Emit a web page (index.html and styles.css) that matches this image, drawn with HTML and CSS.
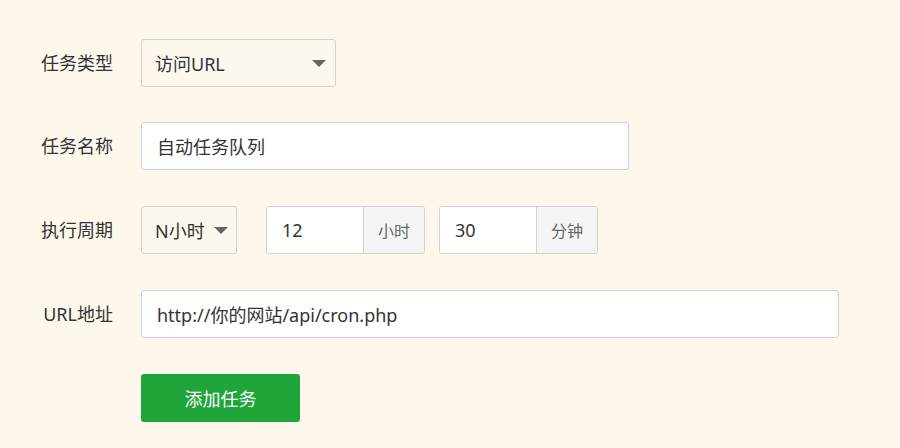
FILE: index.html
```html
<!DOCTYPE html>
<html lang="zh-CN">
<head>
<meta charset="utf-8">
<title>添加任务</title>
<link rel="stylesheet" href="styles.css">
</head>
<body>
<form class="form">
  <div class="row row-first">
    <label class="label">任务类型</label>
    <div class="select select-type"><span>访问URL</span><i class="caret"></i></div>
  </div>
  <div class="row">
    <label class="label">任务名称</label>
    <div class="input input-name">自动任务队列</div>
  </div>
  <div class="row">
    <label class="label">执行周期</label>
    <div class="cycle">
      <div class="select select-cycle"><span>N小时</span><i class="caret"></i></div>
      <div class="group group-hour">
        <div class="group-input">12</div>
        <div class="addon">小时</div>
      </div>
      <div class="group">
        <div class="group-input">30</div>
        <div class="addon">分钟</div>
      </div>
    </div>
  </div>
  <div class="row">
    <label class="label">URL地址</label>
    <div class="input input-url">http://你的网站/api/cron.php</div>
  </div>
  <div class="row">
    <span class="label"></span>
    <button type="button" class="btn">添加任务</button>
  </div>
</form>
</body>
</html>
```
FILE: styles.css
```css
html, body {
  margin: 0;
  padding: 0;
  background: #fef8ec;
}
body {
  font-family: "Noto Sans", "Noto Sans CJK SC", sans-serif;
  font-size: 18px;
  color: #333;
}
.form {
  padding-top: 39px;
  display: flex;
  flex-direction: column;
  gap: 36px;
}
.row-first {
  margin-bottom: -1px;
}
.row {
  display: flex;
  align-items: center;
  gap: 28px;
  height: 48px;
}
.label {
  width: 113px;
  text-align: right;
  flex: none;
  color: #333;
  line-height: 48px;
}
.select {
  box-sizing: border-box;
  height: 48px;
  border: 1px solid #d4d2cc;
  border-radius: 3px;
  background: #fdf8ee;
  display: flex;
  align-items: center;
  justify-content: space-between;
  padding: 0 9px 0 13px;
}
.select-type {
  width: 195px;
}
.select-cycle {
  width: 96px;
  padding-right: 8px;
}
.caret {
  width: 0;
  height: 0;
  border-left: 7px solid transparent;
  border-right: 7px solid transparent;
  border-top: 7px solid #666;
  margin-top: 1px;
}
.input {
  box-sizing: border-box;
  height: 48px;
  border: 1px solid #d2d2d2;
  border-radius: 3px;
  background: #fff;
  padding: 0 15px;
  display: flex;
  align-items: center;
}
.input-name {
  width: 488px;
}
.input-url {
  width: 698px;
}
.cycle {
  display: flex;
  align-items: center;
}
.group {
  display: flex;
  height: 48px;
  box-sizing: border-box;
  border: 1px solid #d2d2d2;
  border-radius: 3px;
  overflow: hidden;
  width: 159px;
}
.group-hour {
  margin-left: 29px;
  margin-right: 14px;
}
.group-input {
  flex: 1;
  background: #fff;
  padding-left: 15px;
  display: flex;
  align-items: center;
}
.addon {
  width: 61px;
  box-sizing: border-box;
  border-left: 1px solid #d2d2d2;
  background: #f5f5f5;
  color: #666;
  font-size: 16px;
  display: flex;
  align-items: center;
  justify-content: center;
}
.btn {
  width: 159px;
  height: 48px;
  border: none;
  border-radius: 3px;
  background: #20a53a;
  color: #fff;
  font-family: inherit;
  font-size: 18px;
  padding: 0;
  cursor: pointer;
}
```
